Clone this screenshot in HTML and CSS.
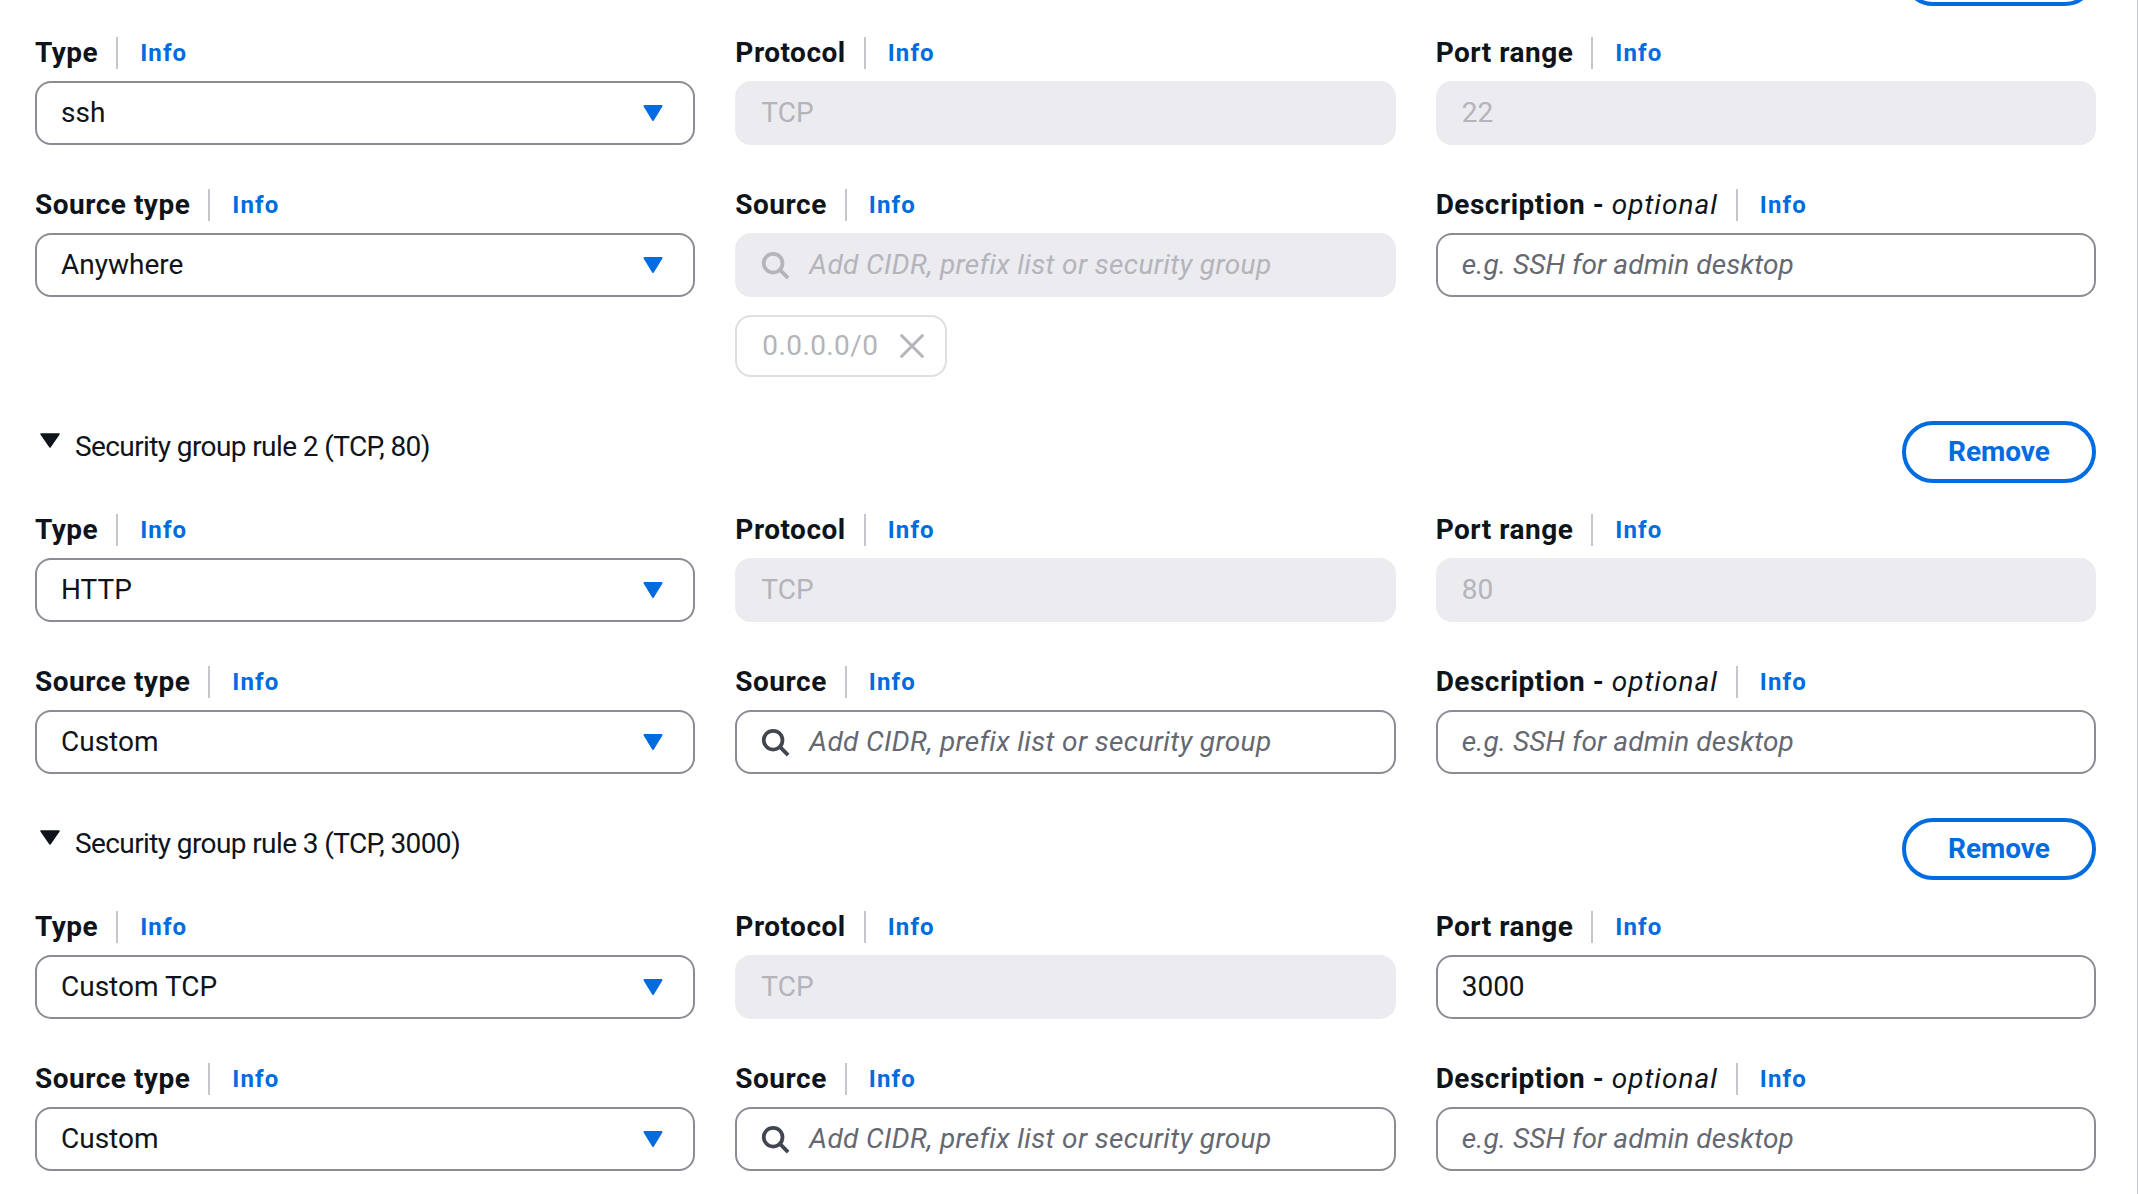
FILE: index.html
```html
<!DOCTYPE html>
<html lang="en">
<head>
<meta charset="utf-8">
<title>Inbound security group rules</title>
<link rel="stylesheet" href="styles.css">
</head>
<body>
<div class="page">

  <section class="rule">
    <div class="rule-header">
      <div class="rule-title">
        <svg class="expander" width="20" height="15" viewBox="0 0 20 15"><polygon points="1,1 19,1 10,14" fill="currentColor" stroke="currentColor" stroke-width="1.5" stroke-linejoin="round"/></svg>
        <span class="rule-name">Security group rule 1 (TCP, 22)</span>
      </div>
      <button class="btn-remove">Remove</button>
    </div>
    <div class="fields">
      <div class="field">
        <div class="label-row"><span class="label">Type</span><span class="divider"></span><a class="info">Info</a></div>
        <div class="control select"><span class="value">ssh</span><svg class="caret" width="20" height="16" viewBox="0 0 20 16"><polygon points="1.5,1 18.5,1 10,15" fill="currentColor" stroke="currentColor" stroke-width="2" stroke-linejoin="round"/></svg></div>
      </div>
      <div class="field">
        <div class="label-row"><span class="label">Protocol</span><span class="divider"></span><a class="info">Info</a></div>
        <div class="control disabled"><span class="value">TCP</span></div>
      </div>
      <div class="field">
        <div class="label-row"><span class="label">Port range</span><span class="divider"></span><a class="info">Info</a></div>
        <div class="control disabled"><span class="value">22</span></div>
      </div>
      <div class="field">
        <div class="label-row"><span class="label">Source type</span><span class="divider"></span><a class="info">Info</a></div>
        <div class="control select"><span class="value">Anywhere</span><svg class="caret" width="20" height="16" viewBox="0 0 20 16"><polygon points="1.5,1 18.5,1 10,15" fill="currentColor" stroke="currentColor" stroke-width="2" stroke-linejoin="round"/></svg></div>
      </div>
      <div class="field">
        <div class="label-row"><span class="label">Source</span><span class="divider"></span><a class="info">Info</a></div>
        <div class="control search disabled"><svg class="search-icon" width="30" height="30" viewBox="0 0 16 16"><circle cx="7" cy="7" r="5" fill="none" stroke="currentColor" stroke-width="2"/><path d="M15 15 10.5 10.5" fill="none" stroke="currentColor" stroke-width="2"/></svg><span class="placeholder wide">Add CIDR, prefix list or security group</span></div>
        <div class="token"><span>0.0.0.0/0</span><svg class="token-x" width="30" height="30" viewBox="0 0 16 16"><path d="M2 2 14 14M14 2 2 14" fill="none" stroke="currentColor" stroke-width="1.6"/></svg></div>
      </div>
      <div class="field">
        <div class="label-row"><span class="label">Description - <i>optional</i></span><span class="divider"></span><a class="info">Info</a></div>
        <div class="control"><span class="placeholder">e.g. SSH for admin desktop</span></div>
      </div>
    </div>
  </section>

  <section class="rule">
    <div class="rule-header">
      <div class="rule-title">
        <svg class="expander" width="20" height="15" viewBox="0 0 20 15"><polygon points="1,1 19,1 10,14" fill="currentColor" stroke="currentColor" stroke-width="1.5" stroke-linejoin="round"/></svg>
        <span class="rule-name">Security group rule 2 (TCP, 80)</span>
      </div>
      <button class="btn-remove">Remove</button>
    </div>
    <div class="fields">
      <div class="field">
        <div class="label-row"><span class="label">Type</span><span class="divider"></span><a class="info">Info</a></div>
        <div class="control select"><span class="value">HTTP</span><svg class="caret" width="20" height="16" viewBox="0 0 20 16"><polygon points="1.5,1 18.5,1 10,15" fill="currentColor" stroke="currentColor" stroke-width="2" stroke-linejoin="round"/></svg></div>
      </div>
      <div class="field">
        <div class="label-row"><span class="label">Protocol</span><span class="divider"></span><a class="info">Info</a></div>
        <div class="control disabled"><span class="value">TCP</span></div>
      </div>
      <div class="field">
        <div class="label-row"><span class="label">Port range</span><span class="divider"></span><a class="info">Info</a></div>
        <div class="control disabled"><span class="value">80</span></div>
      </div>
      <div class="field">
        <div class="label-row"><span class="label">Source type</span><span class="divider"></span><a class="info">Info</a></div>
        <div class="control select"><span class="value">Custom</span><svg class="caret" width="20" height="16" viewBox="0 0 20 16"><polygon points="1.5,1 18.5,1 10,15" fill="currentColor" stroke="currentColor" stroke-width="2" stroke-linejoin="round"/></svg></div>
      </div>
      <div class="field">
        <div class="label-row"><span class="label">Source</span><span class="divider"></span><a class="info">Info</a></div>
        <div class="control search"><svg class="search-icon" width="30" height="30" viewBox="0 0 16 16"><circle cx="7" cy="7" r="5" fill="none" stroke="currentColor" stroke-width="2"/><path d="M15 15 10.5 10.5" fill="none" stroke="currentColor" stroke-width="2"/></svg><span class="placeholder wide">Add CIDR, prefix list or security group</span></div>
      </div>
      <div class="field">
        <div class="label-row"><span class="label">Description - <i>optional</i></span><span class="divider"></span><a class="info">Info</a></div>
        <div class="control"><span class="placeholder">e.g. SSH for admin desktop</span></div>
      </div>
    </div>
  </section>

  <section class="rule">
    <div class="rule-header">
      <div class="rule-title">
        <svg class="expander" width="20" height="15" viewBox="0 0 20 15"><polygon points="1,1 19,1 10,14" fill="currentColor" stroke="currentColor" stroke-width="1.5" stroke-linejoin="round"/></svg>
        <span class="rule-name">Security group rule 3 (TCP, 3000)</span>
      </div>
      <button class="btn-remove">Remove</button>
    </div>
    <div class="fields">
      <div class="field">
        <div class="label-row"><span class="label">Type</span><span class="divider"></span><a class="info">Info</a></div>
        <div class="control select"><span class="value">Custom TCP</span><svg class="caret" width="20" height="16" viewBox="0 0 20 16"><polygon points="1.5,1 18.5,1 10,15" fill="currentColor" stroke="currentColor" stroke-width="2" stroke-linejoin="round"/></svg></div>
      </div>
      <div class="field">
        <div class="label-row"><span class="label">Protocol</span><span class="divider"></span><a class="info">Info</a></div>
        <div class="control disabled"><span class="value">TCP</span></div>
      </div>
      <div class="field">
        <div class="label-row"><span class="label">Port range</span><span class="divider"></span><a class="info">Info</a></div>
        <div class="control"><span class="value">3000</span></div>
      </div>
      <div class="field">
        <div class="label-row"><span class="label">Source type</span><span class="divider"></span><a class="info">Info</a></div>
        <div class="control select"><span class="value">Custom</span><svg class="caret" width="20" height="16" viewBox="0 0 20 16"><polygon points="1.5,1 18.5,1 10,15" fill="currentColor" stroke="currentColor" stroke-width="2" stroke-linejoin="round"/></svg></div>
      </div>
      <div class="field">
        <div class="label-row"><span class="label">Source</span><span class="divider"></span><a class="info">Info</a></div>
        <div class="control search"><svg class="search-icon" width="30" height="30" viewBox="0 0 16 16"><circle cx="7" cy="7" r="5" fill="none" stroke="currentColor" stroke-width="2"/><path d="M15 15 10.5 10.5" fill="none" stroke="currentColor" stroke-width="2"/></svg><span class="placeholder wide">Add CIDR, prefix list or security group</span></div>
      </div>
      <div class="field">
        <div class="label-row"><span class="label">Description - <i>optional</i></span><span class="divider"></span><a class="info">Info</a></div>
        <div class="control"><span class="placeholder">e.g. SSH for admin desktop</span></div>
      </div>
    </div>
  </section>

</div>
</body>
</html>
```

FILE: styles.css
```css
html, body {
  margin: 0;
  padding: 0;
  overflow: hidden;
  background: #ffffff;
}

body {
  font-family: Roboto, "Noto Sans", "Open Sans", sans-serif;
  color: #0f141a;
  font-size: 28px;
  line-height: 44px;
}

.page {
  margin-top: -56px;
  padding: 0 41px 0 35px;
  border-right: 1px solid #c6c6cd;
  min-height: 1300px;
}

.rule {
  margin-bottom: 44px;
}

.rule-header {
  display: flex;
  justify-content: space-between;
  align-items: flex-start;
  height: 62px;
}

.rule-title {
  display: flex;
  align-items: flex-start;
  margin-top: 4px;
  padding-left: 5px;
  color: #0f141a;
}

.expander {
  margin-top: 8px;
  margin-right: 15px;
  flex: none;
}

.rule-name {
  font-size: 28px;
  line-height: 44px;
  letter-spacing: -0.6px;
}

.btn-remove {
  box-sizing: border-box;
  height: 62px;
  padding: 0 42px;
  border: 4px solid #006ce0;
  border-radius: 31px;
  background: #ffffff;
  color: #006ce0;
  font-family: Roboto, "Noto Sans", sans-serif;
  font-size: 28px;
  font-weight: 700;
  line-height: 54px;
  cursor: pointer;
}

.fields {
  margin-top: 25px;
  display: grid;
  grid-template-columns: repeat(3, 1fr);
  column-gap: 40px;
  row-gap: 38px;
}

.field {
  min-width: 0;
}

.label-row {
  display: flex;
  align-items: center;
  height: 44px;
  margin-bottom: 6px;
}

.label {
  font-weight: 700;
  font-size: 28px;
  letter-spacing: 0.5px;
  color: #0f141a;
  white-space: nowrap;
}

.label i {
  font-weight: 400;
  font-style: italic;
  letter-spacing: 1px;
}

.divider {
  width: 2px;
  height: 32px;
  background: #c6c6cd;
  margin: 0 22px 0 18px;
  flex: none;
}

.info {
  font-size: 24px;
  font-weight: 700;
  letter-spacing: 1.1px;
  color: #006ce0;
  cursor: pointer;
}

.control {
  box-sizing: border-box;
  height: 64px;
  border: 2px solid #8c8c94;
  border-radius: 16px;
  padding: 0 24px;
  display: flex;
  align-items: center;
  background: #ffffff;
  color: #0f141a;
  font-size: 28px;
  white-space: nowrap;
  overflow: hidden;
}

.control.select {
  justify-content: space-between;
  padding-right: 30px;
}

.caret {
  color: #006ce0;
  flex: none;
}

.control.disabled {
  background: #ebebf0;
  border-color: #ebebf0;
  color: #b4b4bb;
}

.placeholder {
  font-style: italic;
  color: #656871;
  letter-spacing: 0.1px;
}

.placeholder.wide {
  letter-spacing: 0.35px;
}

.control.disabled .placeholder {
  color: #b4b4bb;
}

.control.search {
  padding-left: 23px;
}

.search-icon {
  flex: none;
  color: #424650;
  margin-right: 19px;
}

.control.disabled .search-icon {
  color: #b4b4bb;
}

.token {
  box-sizing: border-box;
  display: inline-flex;
  align-items: center;
  height: 62px;
  margin-top: 18px;
  padding: 0 18px 0 25px;
  border: 2px solid #dedee3;
  border-radius: 16px;
  color: #b4b4bb;
  font-size: 28px;
  letter-spacing: 0.4px;
}

.token-x {
  margin-left: 19px;
  flex: none;
}
```
